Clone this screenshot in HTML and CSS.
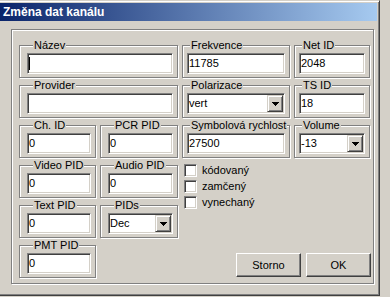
FILE: index.html
```html
<!DOCTYPE html>
<html>
<head>
    <title>Změna dat kanálu</title>
    <meta charset="utf-8">
    <link rel="stylesheet" href="styles.css">
</head>
<body>
    <div class="window">
        <div class="titlebar">Změna dat kanálu</div>

        <div class="panel">
            <div class="grid">
                <!-- row 1 -->
                <div class="group span-2">
                    <span class="group-label">Název</span>
                    <div class="edit"><span class="caret"></span></div>
                </div>
                <div class="group tight">
                    <span class="group-label">Frekvence</span>
                    <div class="edit">11785</div>
                </div>
                <div class="group tight">
                    <span class="group-label">Net ID</span>
                    <div class="edit">2048</div>
                </div>

                <!-- row 2 -->
                <div class="group span-2">
                    <span class="group-label">Provider</span>
                    <div class="edit"></div>
                </div>
                <div class="group tight">
                    <span class="group-label">Polarizace</span>
                    <div class="edit combo"><span class="combo-text">vert</span><span class="drop"><svg width="7" height="4" viewBox="0 0 7 4"><path d="M0 0h7v1H0zM1 1h5v1H1zM2 2h3v1H2zM3 3h1v1H3z"/></svg></span></div>
                </div>
                <div class="group tight">
                    <span class="group-label">TS ID</span>
                    <div class="edit">18</div>
                </div>

                <!-- row 3 -->
                <div class="group">
                    <span class="group-label">Ch. ID</span>
                    <div class="edit">0</div>
                </div>
                <div class="group">
                    <span class="group-label">PCR PID</span>
                    <div class="edit">0</div>
                </div>
                <div class="group tight">
                    <span class="group-label">Symbolová rychlost</span>
                    <div class="edit">27500</div>
                </div>
                <div class="group tight">
                    <span class="group-label">Volume</span>
                    <div class="edit combo"><span class="combo-text">-13</span><span class="drop"><svg width="7" height="4" viewBox="0 0 7 4"><path d="M0 0h7v1H0zM1 1h5v1H1zM2 2h3v1H2zM3 3h1v1H3z"/></svg></span></div>
                </div>

                <!-- row 4 -->
                <div class="group first-col">
                    <span class="group-label">Video PID</span>
                    <div class="edit">0</div>
                </div>
                <div class="group">
                    <span class="group-label">Audio PID</span>
                    <div class="edit">0</div>
                </div>
                <div class="checks">
                    <div class="check"><span class="box"></span>kódovaný</div>
                    <div class="check"><span class="box"></span>zamčený</div>
                    <div class="check"><span class="box"></span>vynechaný</div>
                </div>

                <!-- row 5 -->
                <div class="group first-col">
                    <span class="group-label">Text PID</span>
                    <div class="edit">0</div>
                </div>
                <div class="group">
                    <span class="group-label">PIDs</span>
                    <div class="edit combo"><span class="combo-text">Dec</span><span class="drop"><svg width="7" height="4" viewBox="0 0 7 4"><path d="M0 0h7v1H0zM1 1h5v1H1zM2 2h3v1H2zM3 3h1v1H3z"/></svg></span></div>
                </div>

                <!-- row 6 -->
                <div class="group first-col">
                    <span class="group-label">PMT PID</span>
                    <div class="edit">0</div>
                </div>
                <div class="buttons">
                    <button class="btn">Storno</button>
                    <button class="btn">OK</button>
                </div>
            </div>
        </div>
    </div>
</body>
</html>
```

FILE: styles.css
```css
body {
    margin: 0;
    background: #d4d0c8;
    font-family: "Liberation Sans", Arial, sans-serif;
    font-size: 11px;
    color: #000;
}

.window {
    box-sizing: border-box;
    width: 380px;
    height: 296px;
    padding: 2px 2px 0 0;
    border-top: 1px solid #d4d0c8;
    border-right: 1px solid #404040;
    border-bottom: 1px solid #404040;
    box-shadow: inset 0 1px #fff, inset -1px -1px #808080;
}

.titlebar {
    height: 18px;
    line-height: 18px;
    padding-left: 3px;
    background: linear-gradient(to right, #0a246a, #a6caf0);
    color: #fff;
    font-weight: bold;
    font-size: 12px;
}

/* etched frame around all controls */
.panel {
    box-sizing: border-box;
    width: 363px;
    height: 255px;
    margin: 8px 0 0 11px;
    padding: 15px 0 0 7px;
    border: 1px solid #808080;
    box-shadow: inset 1px 1px #fff, 1px 1px #fff;
}

.grid {
    display: grid;
    grid-template-columns: 77px 78px 108px 76px;
    grid-auto-rows: 33px;
    column-gap: 4px;
    row-gap: 7px;
}

.group {
    box-sizing: border-box;
    padding: 7px 4px 0 7px;
    border: 1px solid #808080;
    box-shadow: inset 1px 1px #fff, 1px 1px #fff;
}

.group.tight {
    padding-left: 4px;
}

.span-2 {
    grid-column: span 2;
}

.first-col {
    grid-column: 1;
}

/* caption sits on the top line of the group box */
.group-label {
    display: block;
    width: fit-content;
    margin: -14px 0 1px 6px;
    padding: 0 1px;
    line-height: 13px;
    white-space: nowrap;
    background: #d4d0c8;
}

.tight .group-label {
    margin-left: 3px;
}

.edit {
    box-sizing: border-box;
    height: 21px;
    padding: 0 1px;
    line-height: 19px;
    background: #fff;
    border: 1px solid;
    border-color: #808080 #fff #fff #808080;
    box-shadow: inset 1px 1px #404040, inset -1px -1px #d4d0c8;
    white-space: nowrap;
}

.caret {
    display: inline-block;
    width: 1px;
    height: 13px;
    margin-top: 3px;
    vertical-align: top;
    background: #000;
}

.combo {
    display: flex;
    padding-right: 1px;
}

.combo-text {
    flex: 1;
}

.drop {
    box-sizing: border-box;
    display: flex;
    align-items: center;
    justify-content: center;
    width: 16px;
    height: 17px;
    margin-top: 1px;
    background: #d4d0c8;
    border: 1px solid;
    border-color: #d4d0c8 #404040 #404040 #d4d0c8;
    box-shadow: inset 1px 1px #fff, inset -1px -1px #808080;
}

.checks {
    grid-column: 3;
    grid-row: 4 / span 2;
    margin: -1px 0 0 2px;
}

.check {
    display: flex;
    align-items: center;
    gap: 5px;
    height: 13px;
    margin-bottom: 3px;
    line-height: 13px;
}

.box {
    box-sizing: border-box;
    width: 13px;
    height: 13px;
    background: #fff;
    border: 1px solid;
    border-color: #808080 #fff #fff #808080;
    box-shadow: inset 1px 1px #404040, inset -1px -1px #d4d0c8;
}

.buttons {
    grid-column: 3 / 5;
    grid-row: 6;
    display: flex;
    justify-content: flex-end;
    gap: 5px;
    padding-top: 8px;
    margin-right: -1px;
}

.btn {
    box-sizing: border-box;
    width: 65px;
    height: 24px;
    padding: 0;
    font: inherit;
    color: #000;
    background: #d4d0c8;
    border: 1px solid;
    border-color: #fff #404040 #404040 #fff;
    box-shadow: inset -1px -1px #808080;
}
```
